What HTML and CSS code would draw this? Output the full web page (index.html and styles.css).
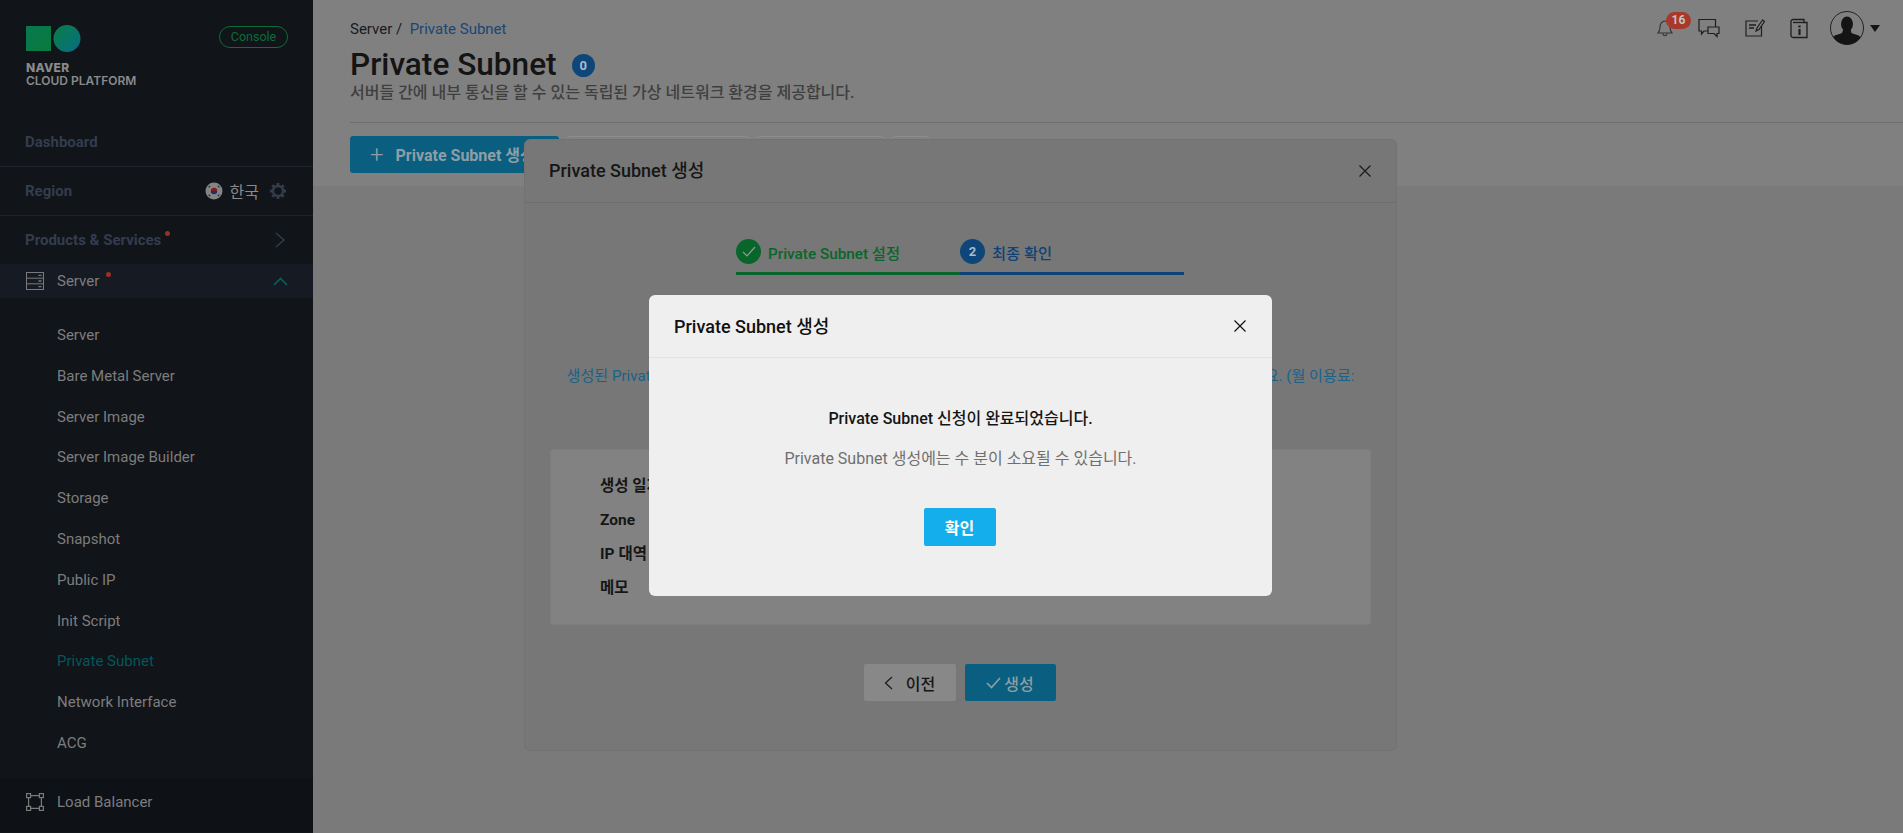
FILE: index.html
```html
<!DOCTYPE html>
<html lang="ko">
<head>
    <meta charset="UTF-8">
    <meta name="viewport" content="width=device-width, initial-scale=1.0">
    <title>Private Subnet</title>
    <link rel="stylesheet" href="styles.css">
</head>
<body>

<div class="page">
    <!-- Left navigation -->
    <aside class="sidebar">
        <div class="brand">
            <div class="brandTop">
                <svg class="brandMark" width="56" height="28" viewBox="0 0 56 28">
                    <defs>
                        <linearGradient id="markA" x1="0" y1="0" x2="1" y2="1">
                            <stop offset="0" stop-color="#06794f"/>
                            <stop offset="1" stop-color="#0a7a3c"/>
                        </linearGradient>
                        <linearGradient id="markB" x1="0" y1="0" x2="1" y2="1">
                            <stop offset="0" stop-color="#0c7d45"/>
                            <stop offset="1" stop-color="#056e84"/>
                        </linearGradient>
                    </defs>
                    <rect x="0" y="1" width="25" height="25" fill="url(#markA)"/>
                    <circle cx="41" cy="13.5" r="13.5" fill="url(#markB)"/>
                </svg>
                <span class="consolePill">Console</span>
            </div>
            <div class="brandName">NAVER</div>
            <div class="brandSub">CLOUD PLATFORM</div>
        </div>

        <div class="navRow">
            <span class="navTitle">Dashboard</span>
        </div>
        <div class="navRow">
            <span class="navTitle">Region</span>
            <span class="regionBox">
                <svg width="18" height="18" viewBox="0 0 18 18">
                    <circle cx="9" cy="9" r="8.5" fill="#858585"/>
                    <path d="M5.8 9a3.2 3.2 0 0 1 6.4 0z" fill="#7d1f22"/>
                    <path d="M5.8 9a3.2 3.2 0 0 0 6.4 0z" fill="#1d2f66"/>
                    <path d="M3.6 5.4l1.6-1.6M12.8 3.8l1.6 1.6M3.6 12.6l1.6 1.6M12.8 14.2l1.6-1.6" stroke="#2a2a2a" stroke-width="1.2"/>
                </svg>
                <span class="regionName">한국</span>
                <svg class="gear" width="18" height="18" viewBox="0 0 18 18" fill="none" stroke="#333d4d">
                    <circle cx="9" cy="9" r="5" stroke-width="2.4"/>
                    <path d="M9 1v2.500M9 14.500V17M1 9h2.500M14.500 9H17M3.300 3.300l1.800 1.800M12.900 12.900l1.800 1.800M3.300 14.700l1.800-1.800M12.900 5.100l1.800-1.800" stroke-width="2.800"/>
                </svg>
            </span>
        </div>
        <div class="navRow navRowLast">
            <span class="navTitle">Products &amp; Services<i class="redDot"></i></span>
            <svg class="chevron" width="10" height="16" viewBox="0 0 10 16" fill="none" stroke="#333d4d" stroke-width="1.5">
                <path d="M1 1l8 7-8 7"/>
            </svg>
        </div>

        <div class="groupRow">
            <svg class="groupIcon" width="18" height="18" viewBox="0 0 18 18" fill="none" stroke="#7a7a7a">
                <rect x=".5" y=".5" width="17" height="17"/>
                <path d="M.5 6.2h17M.5 11.8h17"/>
                <path d="M12.5 3.4h3M12.5 9h3M12.5 14.6h3" stroke-width="1.4"/>
            </svg>
            <span class="groupLabel">Server<i class="redDot redDotFar"></i></span>
            <svg class="chevron" width="15" height="9" viewBox="0 0 15 9" fill="none" stroke="#04615f" stroke-width="1.6">
                <path d="M1 8l6.500-6.500L14 8"/>
            </svg>
        </div>
        <ul class="subMenu">
            <li>Server</li>
            <li>Bare Metal Server</li>
            <li>Server Image</li>
            <li>Server Image Builder</li>
            <li>Storage</li>
            <li>Snapshot</li>
            <li>Public IP</li>
            <li>Init Script</li>
            <li class="active">Private Subnet</li>
            <li>Network Interface</li>
            <li>ACG</li>
        </ul>
        <div class="groupRow groupRowDark">
            <svg class="groupIcon" width="18" height="18" viewBox="0 0 18 18" fill="none" stroke="#7a7a7a" stroke-width="1.2">
                <rect x=".6" y=".6" width="4" height="4"/>
                <rect x="13.400" y=".6" width="4" height="4"/>
                <rect x=".6" y="13.400" width="4" height="4"/>
                <rect x="13.400" y="13.400" width="4" height="4"/>
                <path d="M4.600 2.600h8.800M4.600 15.400h8.800M2.600 4.600v8.800M15.400 4.600v8.800"/>
            </svg>
            <span class="groupLabel">Load Balancer</span>
        </div>
    </aside>

    <main class="main">
        <header class="head">
            <div class="topIcons">
                <span class="bell">
                    <svg width="16" height="19" viewBox="0 0 16 19" fill="none" stroke="#333" stroke-width="1.1">
                        <path d="M1 15c1.500-1.500 2-3 2-6 0-3 2-6 5-6s5 3 5 6c0 3 .5 4.500 2 6z"/>
                        <path d="M6 15.500c0 3 4 3 4 0"/>
                    </svg>
                    <b class="bellCount">16</b>
                </span>
                <svg width="22" height="20" viewBox="0 0 22 20" fill="none" stroke="#1e1e1e" stroke-width="1.2">
                    <path d="M1 1.500h16.500v11H11l-.5.500H6l-2.500 3v-3H1z"/>
                    <path d="M10 9h11v6.500h-2v3l-3-3h-6z" fill="#808080"/>
                </svg>
                <svg width="20" height="20" viewBox="0 0 20 20" fill="none" stroke="#1e1e1e" stroke-width="1.2">
                    <path d="M16.500 5.500v12.500H1V3h12"/>
                    <path d="M4 7h7M4 10h5" stroke-width="1.600"/>
                    <path d="M11 13l1-3 5.500-8 2 1.500-5.500 8z" fill="#808080"/>
                </svg>
                <svg width="18" height="21" viewBox="0 0 18 21" fill="none" stroke="#1e1e1e" stroke-width="1.3">
                    <path d="M3 1.500h11v3H17v15H3a2 2 0 0 1-2-2v-14a2 2 0 0 1 2-2z"/>
                    <path d="M3 4.500h11"/>
                    <path d="M9.500 7.500v2M9.500 11v6" stroke-width="2.200"/>
                </svg>
                <span class="userBox">
                    <svg width="34" height="34" viewBox="0 0 34 34">
                        <defs>
                            <clipPath id="avatarClip"><circle cx="17" cy="17" r="16.500"/></clipPath>
                        </defs>
                        <circle cx="17" cy="17" r="16.500" fill="#808080" stroke="#222"/>
                        <g clip-path="url(#avatarClip)" fill="#141414">
                            <ellipse cx="17" cy="13" rx="6" ry="7.500"/>
                            <path d="M13.500 18h7l1 4c3 1.500 7 1.500 9 4v8H3v-8c2-2.500 6-2.500 9-4z"/>
                        </g>
                    </svg>
                    <i class="caret"></i>
                </span>
            </div>
            <div class="crumbs">Server /&nbsp; <span class="crumbNow">Private Subnet</span></div>
            <h1 class="pageTitle">Private Subnet <span class="countBadge">0</span></h1>
            <p class="pageDesc">서버들 간에 내부 통신을 할 수 있는 독립된 가상 네트워크 환경을 제공합니다.</p>
            <div class="toolbar">
                <button class="btnAdd"><span class="plus">+</span> Private Subnet 생성</button>
                <button class="btnOutline btnW1"></button>
                <button class="btnOutline btnW2"></button>
                <button class="btnOutline btnW3"></button>
            </div>
        </header>
    </main>
</div>

<!-- Create wizard, behind the confirmation -->
<section class="wizard">
    <div class="modalHead wizardHead">
        <span class="modalTitle wizardTitle">Private Subnet 생성</span>
        <svg class="closeX" width="12" height="12" viewBox="0 0 12 12" stroke="#1a1a1a" stroke-width="1.2"><path d="M.5.500l11 11M11.500.500l-11 11"/></svg>
    </div>
    <div class="steps">
        <div class="step stepDone">
            <span class="stepNum">
                <svg width="14" height="12" viewBox="0 0 14 12" fill="none" stroke="#8a9a8e" stroke-width="1.2"><path d="M1 6l4 4 8-9"/></svg>
            </span>
            Private Subnet 설정
        </div>
        <div class="step stepNow">
            <span class="stepNum">2</span>
            최종 확인
        </div>
    </div>
    <p class="notice">생성된 Private Subnet은 서버 간 내부 통신에 이용되며, 생성 후에 설정을 변경할 수 없으니 신중하게 선택해 주세요. (월 이용료:</p>
    <div class="summary">
        <div class="summaryRow">생성 일자</div>
        <div class="summaryRow">Zone</div>
        <div class="summaryRow">IP 대역</div>
        <div class="summaryRow">메모</div>
    </div>
    <div class="wizardBtns">
        <button class="btnPrev">
            <svg width="9" height="14" viewBox="0 0 9 14" fill="none" stroke="#1a1a1a" stroke-width="1.2"><path d="M8 1L1.500 7 8 13"/></svg>
            이전
        </button>
        <button class="btnMake">
            <svg width="15" height="12" viewBox="0 0 15 12" fill="none" stroke="#8f9ea5" stroke-width="1.6"><path d="M1 6l4.500 4.500L14 1"/></svg>
            생성
        </button>
    </div>
</section>

<!-- Confirmation dialog -->
<section class="dialog">
    <div class="modalHead dialogHead">
        <span class="modalTitle dialogTitle">Private Subnet 생성</span>
        <svg class="closeX" width="12" height="12" viewBox="0 0 12 12" stroke="#111" stroke-width="1.200"><path d="M.5.500l11 11M11.500.500l-11 11"/></svg>
    </div>
    <div class="dialogBody">
        <p class="dialogMsg">Private Subnet 신청이 완료되었습니다.</p>
        <p class="dialogSub">Private Subnet 생성에는 수 분이 소요될 수 있습니다.</p>
        <button class="btnOk">확인</button>
    </div>
</section>

</body>
</html>
```

FILE: styles.css
```css
/* every colour here is the dimmed value seen under the backdrop */
* {
    box-sizing: border-box;
}

html, body {
    margin: 0;
    height: 100%;
    overflow: hidden;
}

body {
    font-family: Roboto, "Noto Sans CJK KR", sans-serif;
    background-color: #7a7a7a;
    color: #141414;
}

button {
    font-family: inherit;
    border: none;
    padding: 0;
}

.page {
    display: flex;
    height: 833px;
}

/* sidebar */
.sidebar {
    width: 313px;
    flex-shrink: 0;
    background-color: #111419;
    color: #7d7d7d;
    display: flex;
    flex-direction: column;
}

.brand {
    height: 118px;
    padding: 25px 25px 0 26px;
}

.brandTop {
    display: flex;
    justify-content: space-between;
    align-items: flex-start;
}

.brandMark {
    display: block;
}

.consolePill {
    border: 1px solid #0a6e36;
    border-radius: 11px;
    color: #0a6e36;
    font-size: 12.500px;
    line-height: 20px;
    height: 22px;
    width: 69px;
    text-align: center;
    margin-top: 1px;
}

.brandName {
    font-family: Inter, sans-serif;
    font-weight: 800;
    font-size: 12px;
    letter-spacing: .3px;
    line-height: 13px;
    color: #8a8a8a;
    margin-top: 8px;
}

.brandSub {
    font-family: Inter, sans-serif;
    font-weight: 600;
    font-size: 12px;
    line-height: 13px;
    color: #8a8a8a;
}

.navRow {
    height: 49px;
    padding: 0 25px;
    border-bottom: 1px solid #1f232a;
    display: flex;
    align-items: center;
    justify-content: space-between;
}

.navRowLast {
    border-bottom: none;
    height: 48px;
}

.navTitle {
    color: #333d4d;
    font-size: 15px;
    font-weight: 700;
}

.redDot {
    display: inline-block;
    width: 5px;
    height: 5px;
    border-radius: 50%;
    background-color: #9b2f26;
    margin-left: 4px;
    vertical-align: 9px;
}

.redDotFar {
    margin-left: 7px;
}

.regionBox {
    display: flex;
    align-items: center;
}

.regionName {
    color: #8a8a8a;
    font-size: 16px;
    margin: 0 10px 0 7px;
}

.gear {
    margin-right: 1px;
}

.chevron {
    margin-right: 3px;
}

.groupRow {
    height: 34px;
    padding: 0 25px 0 26px;
    background-color: #161a23;
    display: flex;
    align-items: center;
}

.groupRow .chevron {
    margin-left: auto;
    margin-right: 0;
}

.groupIcon {
    margin-right: 13px;
}

.groupLabel {
    font-size: 15px;
    color: #7d7d7d;
}

.groupRowDark {
    background-color: #0e1116;
    height: 53px;
    align-items: flex-start;
    padding-top: 14px;
}

.subMenu {
    list-style: none;
    margin: 0;
    padding: 17px 0 15px;
}

.subMenu li {
    height: 40.800px;
    line-height: 40.800px;
    padding-left: 57px;
    font-size: 15px;
}

.subMenu .active {
    color: #04575a;
}

/* main header */
.main {
    flex: 1;
    min-width: 0;
}

.head {
    position: relative;
    height: 186px;
    background-color: #808080;
    padding: 20px 0 0 37px;
}

.topIcons {
    position: absolute;
    top: 11px;
    right: 23px;
    display: flex;
    align-items: center;
    gap: 25px;
}

.bell {
    position: relative;
    display: block;
    width: 16px;
    height: 20px;
}

.bellCount {
    position: absolute;
    left: 9px;
    top: -6px;
    width: 25px;
    height: 17px;
    border-radius: 9px;
    background-color: #a8382c;
    color: #c8c0be;
    font-size: 12px;
    line-height: 17px;
    text-align: center;
}

.userBox {
    display: flex;
    align-items: center;
    gap: 6px;
    margin-left: -3px;
}

.caret {
    width: 0;
    height: 0;
    border-left: 5px solid transparent;
    border-right: 5px solid transparent;
    border-top: 7px solid #141414;
}

.crumbs {
    font-size: 15px;
    line-height: 18px;
    color: #1a1a1a;
}

.crumbNow {
    color: #1a4675;
}

.pageTitle {
    margin: 10px 0 0;
    font-size: 31.600px;
    font-weight: 500;
    line-height: 34px;
    color: #141414;
    display: flex;
    align-items: center;
    gap: 15px;
}

.countBadge {
    width: 23px;
    height: 23px;
    border-radius: 50%;
    background-color: #0e4679;
    color: #a9bccf;
    font-size: 13px;
    font-weight: 700;
    line-height: 23px;
    text-align: center;
}

.pageDesc {
    margin: 0;
    font-size: 16px;
    font-weight: 500;
    line-height: 22px;
    color: #3f3f3f;
    padding-bottom: 18px;
    border-bottom: 1px solid #6e6e6e;
}

.toolbar {
    display: flex;
    gap: 8px;
    margin-top: 13px;
}

.btnAdd {
    width: 209px;
    height: 37px;
    border-radius: 3px;
    background-color: #0a5f80;
    color: #8f9ea5;
    font-size: 16px;
    font-weight: 700;
    text-align: left;
    padding: 0 0 2px 20px;
    white-space: nowrap;
    overflow: hidden;
}

.plus {
    font-size: 24px;
    font-weight: 300;
    line-height: 20px;
    vertical-align: -2px;
    margin-right: 8px;
}

.btnOutline {
    height: 37px;
    border: 1px solid #8c8c8c;
    border-radius: 3px;
    background-color: #808080;
}

.btnW1 {
    width: 182px;
}

.btnW2 {
    width: 127px;
}

.btnW3 {
    width: 37px;
}

/* wizard modal */
.wizard {
    position: absolute;
    left: 524px;
    top: 139px;
    width: 873px;
    height: 612px;
    border: 1px solid #727272;
    border-radius: 6px;
    background-color: #777777;
}

.modalHead {
    display: flex;
    align-items: center;
    justify-content: space-between;
    border-bottom: 1px solid #6e6e6e;
}

.wizardHead {
    height: 63px;
    padding: 0 25px 0 24px;
}

.modalTitle {
    font-size: 18px;
    font-weight: 500;
    color: #161616;
}

.wizardTitle {
    margin-bottom: 5px;
}

.steps {
    display: flex;
    width: 448px;
    margin: 37px 0 0 211px;
}

.step {
    width: 224px;
    height: 35px;
    padding-bottom: 9px;
    border-bottom: 3px solid;
    display: flex;
    align-items: center;
    gap: 7px;
    font-size: 15.300px;
    font-weight: 500;
}

.stepDone {
    color: #09662a;
    border-color: #09662a;
}

.stepNow {
    color: #0e4377;
    border-color: #0e4377;
}

.stepNum {
    width: 25px;
    height: 25px;
    border-radius: 50%;
    display: flex;
    align-items: center;
    justify-content: center;
}

.stepDone .stepNum {
    background-color: #09662a;
}

.stepNow .stepNum {
    background-color: #0e4679;
    color: #a9bccf;
    font-size: 13px;
    font-weight: 700;
}

.notice {
    margin: 91px 0 0;
    text-align: center;
    font-size: 15.100px;
    line-height: 20px;
    color: #1a6288;
    white-space: nowrap;
}

.summary {
    margin: 63px 25px 0;
    height: 176px;
    padding: 19px 41px 0 49px;
    border: 1px solid #7d7d7d;
    border-radius: 3px;
    background-color: #828282;
}

.summaryRow {
    height: 34px;
    line-height: 34px;
    font-size: 15.500px;
    font-weight: 700;
    color: #161616;
}

.wizardBtns {
    display: flex;
    justify-content: center;
    gap: 9px;
    margin-top: 39px;
    padding-right: 2px;
}

.btnPrev, .btnMake {
    height: 37px;
    border-radius: 2px;
    font-size: 16px;
    font-weight: 500;
    display: flex;
    align-items: center;
    justify-content: center;
}

.btnPrev {
    width: 92px;
    gap: 13px;
    background-color: #888888;
    color: #161616;
}

.btnMake {
    width: 91px;
    gap: 3px;
    background-color: #0a5f80;
    color: #8f9ea5;
}

/* confirmation */
.dialog {
    position: absolute;
    left: 649px;
    top: 295px;
    width: 623px;
    height: 301px;
    border-radius: 6px;
    background-color: #efefef;
}

.dialogHead {
    height: 63px;
    padding: 0 26px 0 25px;
    border-bottom-color: #e2e2e2;
}

.dialogTitle {
    color: #111;
    margin-bottom: 2px;
}

.dialogBody {
    display: flex;
    flex-direction: column;
    align-items: center;
}

.dialogMsg {
    margin: 51px 0 0;
    font-size: 16px;
    font-weight: 500;
    line-height: 20px;
    color: #151515;
}

.dialogSub {
    margin: 20px 0 0;
    font-size: 16px;
    line-height: 20px;
    color: #6f6f6f;
}

.btnOk {
    margin: 39px 2px 0 0;
    width: 72px;
    height: 38px;
    border-radius: 2px;
    background-color: #14aeec;
    color: #fff;
    font-size: 16px;
    font-weight: 700;
}
```
